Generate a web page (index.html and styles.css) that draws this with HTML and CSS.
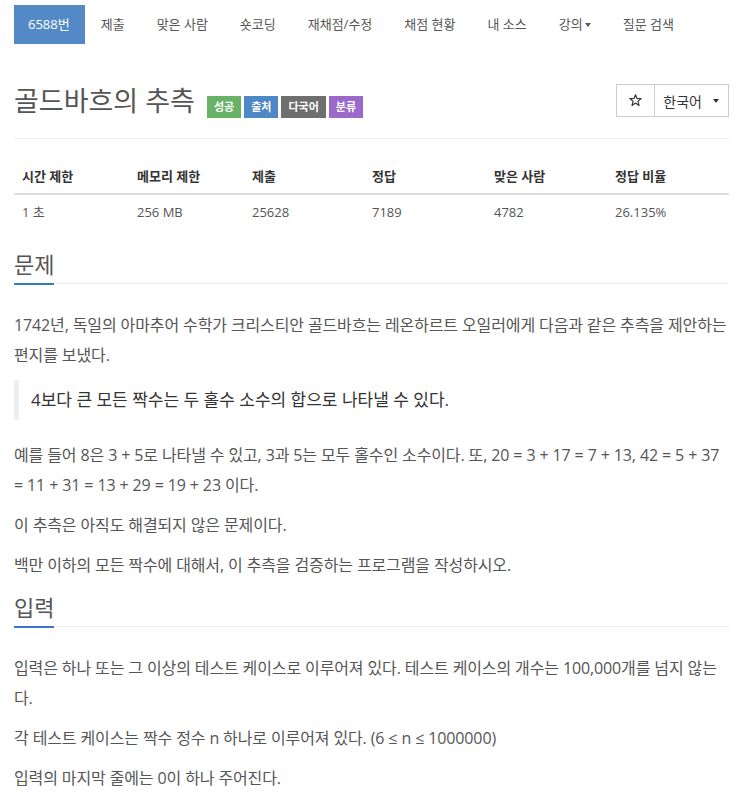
FILE: index.html
```html
<!DOCTYPE html>
<html lang="ko">
<head>
<meta charset="utf-8">
<title>골드바흐의 추측</title>
<link rel="stylesheet" href="styles.css">
</head>
<body>
<div class="container">
  <nav class="topnav">
    <ul class="tabs">
      <li class="tab active">6588번</li>
      <li class="tab">제출</li>
      <li class="tab">맞은 사람</li>
      <li class="tab">숏코딩</li>
      <li class="tab">재채점/수정</li>
      <li class="tab">채점 현황</li>
      <li class="tab">내 소스</li>
      <li class="tab">강의<span class="caret nav-caret"></span></li>
      <li class="tab">질문 검색</li>
    </ul>
  </nav>

  <div class="page-header">
    <h1 class="title">
      <span class="title-text">골드바흐의 추측</span>
      <span class="label label-success">성공</span>
      <span class="label label-primary">출처</span>
      <span class="label label-default">다국어</span>
      <span class="label label-purple">분류</span>
    </h1>
    <div class="btn-group">
      <button class="btn btn-star" type="button">
        <svg class="star-icon" width="13" height="13" viewBox="0 0 14 14" aria-hidden="true">
          <polygon points="7,0.8 8.59,4.82 13.1,5.0 9.57,7.83 10.8,12.3 7,9.7 3.2,12.3 4.43,7.83 0.9,5.0 5.41,4.82" fill="none" stroke="#333" stroke-width="1.2" stroke-linejoin="round"/>
        </svg>
      </button>
      <button class="btn btn-lang" type="button"><span>한국어</span><span class="caret lang-caret"></span></button>
    </div>
  </div>

  <table class="info">
    <colgroup>
      <col class="w1"><col class="w2"><col class="w3"><col class="w4"><col class="w5"><col class="w6">
    </colgroup>
    <thead>
      <tr><th>시간 제한</th><th>메모리 제한</th><th>제출</th><th>정답</th><th>맞은 사람</th><th>정답 비율</th></tr>
    </thead>
    <tbody>
      <tr><td>1 초</td><td>256 MB</td><td>25628</td><td>7189</td><td>4782</td><td>26.135%</td></tr>
    </tbody>
  </table>

  <section class="problem-section">
    <div class="headline"><h2>문제</h2></div>
    <div class="problem-text">
      <p>1742년, 독일의 아마추어 수학가 크리스티안 골드바흐는 레온하르트 오일러에게 다음과 같은 추측을 제안하는 편지를 보냈다.</p>
      <blockquote><p>4보다 큰 모든 짝수는 두 홀수 소수의 합으로 나타낼 수 있다.</p></blockquote>
      <p>예를 들어 8은 3 + 5로 나타낼 수 있고, 3과 5는 모두 홀수인 소수이다. 또, 20 = 3 + 17 = 7 + 13, 42 = 5 + 37 = 11 + 31 = 13 + 29 = 19 + 23 이다.</p>
      <p>이 추측은 아직도 해결되지 않은 문제이다.</p>
      <p>백만 이하의 모든 짝수에 대해서, 이 추측을 검증하는 프로그램을 작성하시오.</p>
    </div>
  </section>

  <section class="problem-section">
    <div class="headline"><h2>입력</h2></div>
    <div class="problem-text">
      <p>입력은 하나 또는 그 이상의 테스트 케이스로 이루어져 있다. 테스트 케이스의 개수는 100,000개를 넘지 않는다.</p>
      <p>각 테스트 케이스는 짝수 정수 n 하나로 이루어져 있다. (6 ≤ n ≤ 1000000)</p>
      <p>입력의 마지막 줄에는 0이 하나 주어진다.</p>
    </div>
  </section>
</div>
</body>
</html>
```

FILE: styles.css
```css
html, body {
  margin: 0;
  padding: 0;
  background: #fff;
}

body {
  font-family: "Open Sans", "Noto Sans CJK KR", sans-serif;
  color: #555;
  font-size: 13px;
}

.container {
  padding: 0 14px;
}

/* top navigation */
.tabs {
  display: flex;
  list-style: none;
  margin: 0;
  padding: 5px 0 0 0;
}

.tab {
  height: 39px;
  line-height: 39px;
  padding: 0 16px;
  font-size: 13px;
  color: #555;
  white-space: nowrap;
  display: flex;
  align-items: center;
}

.tab.active {
  background: #5389c7;
  color: #fff;
  padding: 0 15px 0 14px;
}

.caret {
  display: inline-block;
  width: 0;
  height: 0;
  border-top: 4px solid #555;
  border-left: 3.5px solid transparent;
  border-right: 3.5px solid transparent;
}

.nav-caret {
  margin-left: 2px;
  margin-top: 1px;
}

/* page header */
.page-header {
  display: flex;
  justify-content: space-between;
  align-items: flex-start;
  margin-top: 40px;
  padding-bottom: 20px;
  border-bottom: 1px solid #eee;
}

.title {
  display: flex;
  align-items: baseline;
  gap: 3px;
  margin: 0;
  font-size: 27px;
  line-height: 34px;
  font-weight: 400;
  color: #555;
}

.title-text {
  margin-right: 9px;
}

.label {
  display: inline-block;
  height: 22px;
  line-height: 22px;
  padding: 0 7px;
  font-size: 11px;
  font-weight: 700;
  color: #fff;
}

.label-success { background: #69b369; }
.label-primary { background: #4f88c7; }
.label-default { background: #6f6f6f; }
.label-purple  { background: #9a69c9; }

.btn-group {
  display: flex;
}

.btn {
  height: 33px;
  margin: 0;
  border: 1px solid #ccc;
  background: #fff;
  font-family: "Open Sans", "Noto Sans CJK KR", sans-serif;
  font-size: 14px;
  color: #333;
  display: flex;
  align-items: center;
}

.btn-star {
  padding: 0 12px;
}

.star-icon {
  display: block;
}

.btn-lang {
  margin-left: -1px;
  padding: 0 9px 0 8px;
  gap: 11px;
}

.lang-caret {
  border-top-color: #333;
}

/* info table */
.info {
  width: 100%;
  border-collapse: collapse;
  margin: 20px 0;
  font-size: 13px;
}

.w1 { width: 115px; }
.w2 { width: 115px; }
.w3 { width: 120px; }
.w4 { width: 122px; }
.w5 { width: 121px; }
.w6 { width: 122px; }

.info th,
.info td {
  text-align: left;
  padding: 8px;
  line-height: 18px;
}

.info th {
  color: #333;
  font-weight: 700;
  border-bottom: 2px solid #ddd;
}

.info td {
  color: #555;
}

/* problem sections */
.headline {
  margin: 10px 0 26px;
  border-bottom: 1px solid #e8ecf1;
}

.headline h2 {
  display: inline-block;
  margin: 0 0 -2px;
  padding-bottom: 4px;
  font-size: 22px;
  line-height: 30px;
  font-weight: 400;
  color: #555;
  border-bottom: 2px solid #3a78c3;
}

.problem-section + .problem-section {
  margin-top: 12px;
}

.problem-text {
  font-size: 16px;
  line-height: 30px;
  letter-spacing: -0.12px;
  color: #555;
}

.problem-text p {
  margin: 0 0 10px;
}

.problem-text blockquote {
  margin: 0 0 20px;
  padding: 8px 12px;
  border-left: 5px solid #eee;
  font-size: 17px;
  line-height: 24px;
  letter-spacing: 0;
  color: #333;
}

.problem-text blockquote p {
  margin: 0;
}
```
